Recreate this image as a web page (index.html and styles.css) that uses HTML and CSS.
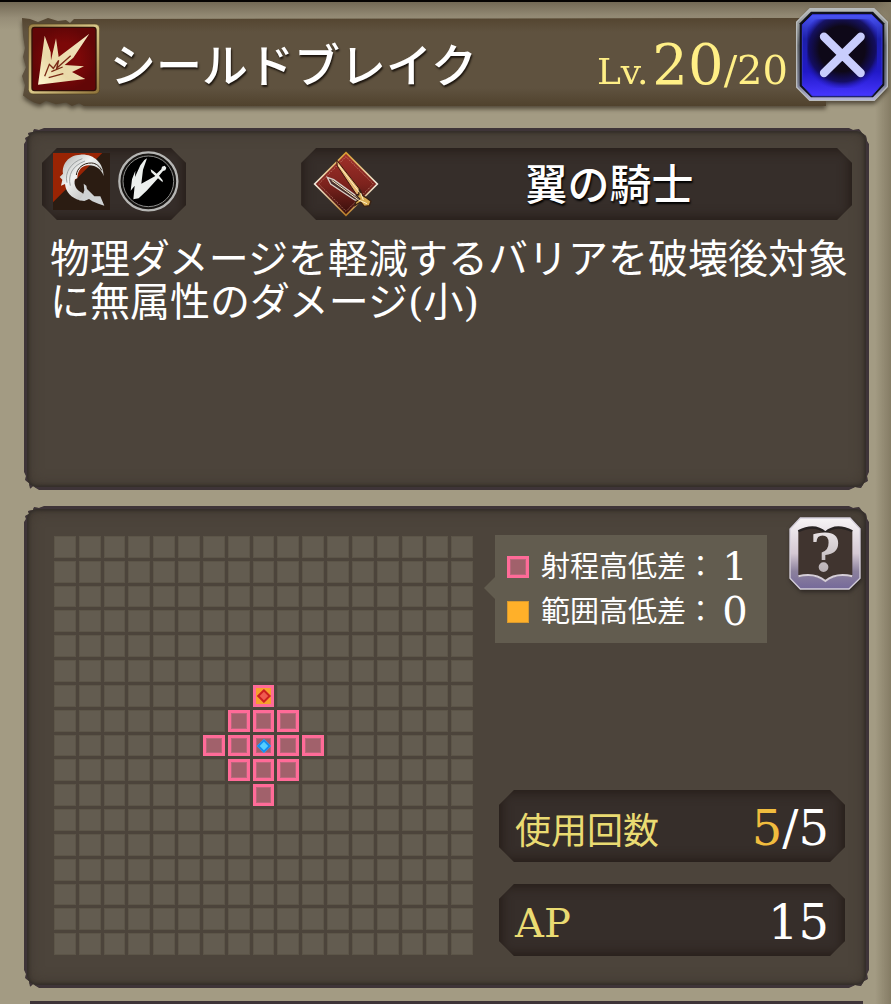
FILE: index.html
```
<!DOCTYPE html>
<html lang="ja">
<head>
  <meta charset="UTF-8">
  <meta name="viewport" content="width=device-width, initial-scale=1">
  <title>シールドブレイク</title>
  <link rel="stylesheet" href="styles.css">
</head>
<body>
  <div class="page">
    <header class="top">
      <div class="title-bar">
        <svg class="skill-icon" viewBox="0 0 216 216" aria-hidden="true">
          <defs>
            <linearGradient id="frame" x1="0" y1="0" x2="1" y2="1">
              <stop offset="0" stop-color="#9a7f45"/><stop offset=".5" stop-color="#d9c88a"/><stop offset="1" stop-color="#8d7138"/>
            </linearGradient>
            <radialGradient id="red"><stop offset=".5" stop-color="#7c0808"/><stop offset="1" stop-color="#620607"/></radialGradient>
            <linearGradient id="burst" x1="0" y1="1" x2="1" y2="0">
              <stop offset="0" stop-color="#fff6cf"/><stop offset=".35" stop-color="#e9d9a8"/><stop offset="1" stop-color="#f3e6c2"/>
            </linearGradient>
          </defs>
          <rect x="1" y="3" width="214" height="210" rx="14" fill="url(#frame)" stroke="#50401f" stroke-width="2"/>
          <rect x="12" y="13" width="192" height="190" rx="8" fill="url(#red)" stroke="#321008" stroke-width="4"/>
          <path d="M30 185 50 38 68 88 69 112 84 46 92 102 184 32 136 104 110 126 168 130 132 147 172 168Z" fill="url(#burst)"/>
          <path d="M50 160 64 124 76 136 92 112 86 136 128 98M70 146 104 132M62 164 106 152" fill="none" stroke="#7a2a16" stroke-width="4"/>
        </svg>
        <h1>シールドブレイク</h1>
        <div class="level">Lv.<b>20</b><span>/20</span></div>
      </div>
      <button class="close-btn" type="button" aria-label="閉じる">
        <svg viewBox="0 0 276 280" aria-hidden="true">
          <defs>
            <linearGradient id="steel" x1="0" y1="0" x2="0" y2="1">
              <stop offset="0" stop-color="#b9bdbb"/><stop offset=".4" stop-color="#5d6167"/><stop offset=".8" stop-color="#717589"/><stop offset="1" stop-color="#b8b7df"/>
            </linearGradient>
            <linearGradient id="blue" x1="0" y1="0" x2="0" y2="1">
              <stop offset="0" stop-color="#4a55f5"/><stop offset=".3" stop-color="#1c1fa8"/><stop offset=".7" stop-color="#2119c8"/><stop offset="1" stop-color="#4635ff"/>
            </linearGradient>
            <radialGradient id="dark" cx=".5" cy=".43" r=".6">
              <stop offset=".55" stop-color="#0e0818"/><stop offset=".8" stop-color="#110b50" stop-opacity=".85"/><stop offset="1" stop-color="#2018c8" stop-opacity="0"/>
            </radialGradient>
          </defs>
          <path d="M42 2H234L274 42V236L234 278H42L2 238V42Z" fill="url(#steel)" stroke="#b9bcbe" stroke-width="4"/>
          <path d="M45 11H231L265 46V232L231 268H45L11 234V46Z" fill="#10111c"/>
          <path d="M49 20H227L258 50V228L227 264H49L19 232V50Z" fill="url(#blue)" stroke="#3535d8" stroke-width="3"/>
          <path d="M56 34H220L243 56V220L220 240H56L34 220V56Z" fill="url(#dark)"/>
          <path d="M84 86 194 195M194 86 84 195" stroke="#c9cdfd" stroke-width="25" stroke-linecap="round"/>
        </svg>
      </button>
    </header>

    <section class="panel summary">
      <div class="chips">
        <div class="chip types">
          <svg class="type-sq" viewBox="0 0 171 171" role="img" aria-label="斬撃">
            <defs>
              <linearGradient id="silver" x1="0" y1="0" x2="1" y2="1">
                <stop offset="0" stop-color="#a9aaa8"/><stop offset=".4" stop-color="#f1f3f2"/><stop offset="1" stop-color="#a5a5a3"/>
              </linearGradient>
            </defs>
            <path d="M0 0H171V171H0Z" fill="#2b1c12"/>
            <path d="M0 0H148L0 148Z" fill="#992404"/>
            <path d="M152 70C152 28 120 2 82 5 46 6 26 34 30 62L20 72 28 80 24 98 36 93C38 118 56 136 82 142L100 134 88 120C70 112 61 96 66 79L73 76C73 53 87 37 106 37 128 36 146 49 152 70Z" fill="url(#silver)"/>
            <path d="M70 66C72 46 90 29 116 30 130 31 140 40 146 52" fill="none" stroke="#2b1c12" stroke-width="3"/>
            <path d="M42 89C34 59 54 28 88 17M52 98C44 66 58 38 96 24" fill="none" stroke="#9ea2a3" stroke-width="3"/>
            <path d="M92 92 100 98 102 108 112 118 124 130 142 130 154 158 136 152 118 145 108 138 94 144 78 142 88 130 94 112Z" fill="#cfd2d3"/>
          </svg>
          <svg class="type-round" viewBox="0 0 183 183" role="img" aria-label="物理">
            <circle cx="91" cy="91" r="87" fill="#171513" stroke="#b6b6b4" stroke-width="7"/>
            <circle cx="91" cy="91" r="76" fill="#000" stroke="#8b8b89" stroke-width="3"/>
            <path d="M46 145 50 104 38 119 42 85 52 59 51 78 67 43 79 27 87 22 75 56 70 98 112 75 100 64 98 55 105 59 116 68 130 55 132 47 140 44 145 50 142 58 135 60 123 74 134 88 134 94 120 82 86 119 62 142Z" fill="#edf0ee"/>
          </svg>
        </div>
        <div class="chip job">
          <svg class="job-icon" viewBox="0 0 198 198" aria-hidden="true">
            <defs>
              <linearGradient id="gem" x1="0" y1="0" x2="0" y2="1">
                <stop offset="0" stop-color="#a3302a"/><stop offset=".5" stop-color="#7d231d"/><stop offset="1" stop-color="#350e0b"/>
              </linearGradient>
              <linearGradient id="gold" x1="0" y1="0" x2="0" y2="1">
                <stop offset="0" stop-color="#d59a2e"/><stop offset=".5" stop-color="#f1e8dc"/><stop offset="1" stop-color="#b67a25"/>
              </linearGradient>
            </defs>
            <path d="M99 5 193 99 99 193 5 99Z" fill="url(#gem)" stroke="url(#gold)" stroke-width="5"/>
            <path d="M99 17 181 99 99 181 17 99Z" fill="none" stroke="#d49b83" stroke-width="2" stroke-dasharray="4 3"/>
            <path d="M71 27 85 45 145 121 141 131 130 130 73 45Z" fill="#e4b570" stroke="#3d1711" stroke-width="3"/>
            <path d="M43 79 62 86 136 139 142 151 125 147 53 99Z" fill="#4a302d" stroke="#d8cdc5" stroke-width="4"/>
            <path d="M139 115 148 133 158 139 174 151 169 164 154 166 143 153 126 163 128 153 140 144 130 133 137 132Z" fill="#d8ad52" stroke="#392113" stroke-width="4"/>
            <path d="M76 41 139 124M56 88 137 147 162 158M143 126 151 147" fill="none" stroke="#fff1c6" stroke-width="3"/>
          </svg>
          <span class="job-name">翼の騎士</span>
        </div>
      </div>
      <p class="description">物理ダメージを軽減するバリアを破壊後対象に無属性のダメージ(小)</p>
    </section>

    <section class="panel range">
      <div class="map" id="map"></div>
      <div class="side">
        <div class="side-top">
          <dl class="legend">
            <div><dt><i class="swatch reach"></i>射程高低差：</dt><dd>1</dd></div>
            <div><dt><i class="swatch area"></i>範囲高低差：</dt><dd>0</dd></div>
          </dl>
          <button class="help-btn" type="button" aria-label="ヘルプ">
            <svg viewBox="0 0 216 222" aria-hidden="true">
              <defs>
                <linearGradient id="pearl" x1="0" y1="0" x2="0" y2="1">
                  <stop offset="0" stop-color="#f7f4f6"/><stop offset=".5" stop-color="#d5c8d3"/><stop offset=".75" stop-color="#8c819d"/><stop offset="1" stop-color="#75699a"/>
                </linearGradient>
                <linearGradient id="mark" x1="0" y1="0" x2="0" y2="1">
                  <stop offset="0" stop-color="#f4eef0"/><stop offset="1" stop-color="#aaa1a5"/>
                </linearGradient>
              </defs>
              <path d="M34 3H183L213 35V184L180 216H34L3 184V36Z" fill="url(#pearl)" stroke="#d5cfdb" stroke-width="4"/>
              <path d="M28 43Q77 18 109 47 141 18 190 43V180Q141 168 109 194 77 168 28 180Z" fill="#40342f"/>
              <path d="M28 43Q77 18 109 47 141 18 190 43" fill="none" stroke="#282323" stroke-width="7"/>
              <path d="M28 178Q77 166 109 192 141 166 190 178" fill="none" stroke="#d5ced8" stroke-width="6"/>
              <text x="109" y="163" text-anchor="middle" class="help-mark" fill="url(#mark)">?</text>
            </svg>
          </button>
        </div>
        <dl class="stats">
          <div class="chip"><dt>使用回数</dt><dd><em>5</em>/5</dd></div>
          <div class="chip"><dt class="latin">AP</dt><dd>15</dd></div>
        </dl>
      </div>
    </section>

    <section class="panel-next"></section>
  </div>

  <script>
    const map = document.getElementById('map');
    const size = 17;
    const center = 8;
    const reach = 2;

    for (let y = 0; y < size; y++) {
      for (let x = 0; x < size; x++) {
        const cell = document.createElement('span');
        const distance = Math.abs(x - center) + Math.abs(y - center);
        cell.className = 'cell';
        if (distance <= reach) cell.classList.add('reach');
        if (distance === 0) cell.classList.add('self');
        if (x === center && y === center - reach) cell.classList.add('target');
        map.appendChild(cell);
      }
    }
  </script>
</body>
</html>
```
FILE: styles.css
```
* {
  box-sizing: border-box;
}
body {
  margin: 0;
  background: #a39b83;
  color: #fff;
  font-family: "DejaVu Serif", "Noto Sans CJK JP", serif;
}
h1, p, dl, dd {
  margin: 0;
}
button {
  padding: 0;
  border: none;
  background: none;
  cursor: pointer;
}
svg {
  display: block;
}
.page {
  display: flex;
  flex-direction: column;
  min-height: 100vh;
  padding: 8px 22px 0 24px;
  border-top: 2px solid #050302;
  background:
    linear-gradient(to left, #857c65, rgba(163,155,131,0) 16px),
    linear-gradient(#736955, #978e78 16px, #a39b83 28px);
}

/* header */
.top {
  display: flex;
  align-items: flex-start;
  margin: -2px -19px 0 -2px;
  filter: drop-shadow(0 3px 2px rgba(50,42,28,0.7));
}
.title-bar {
  flex: 1;
  display: flex;
  align-items: center;
  height: 88px;
  margin-top: 10px;
  padding: 0 38px 6px 6px;
  background: linear-gradient(#544530, #5f523f 14px, #5f523f 70px, #50422d);
  clip-path: polygon(0 0, 8px 1px, 16px 4px, 26px 0, 36px 3px, 44px 2px, 48px 5px, 52px 1px, 100% 0, 100% 100%, 62px 100%, 57px 97%, 50px 100%, 44px 96%, 34px 98%, 24px 94%, 18px 98%, 12px 96%, 6px 92%, 1px 88%, 3px 76%, 0 66%, 4px 56%, 1px 44%, 3px 34%, 1px 20%);
}
.skill-icon {
  flex: none;
  width: 72px;
  height: 72px;
}
h1 {
  flex: 1;
  margin-left: 10px;
  padding-top: 14px;
  font-size: 46px;
  font-weight: 500;
  line-height: 72px;
  white-space: nowrap;
  text-shadow: 1px 2px 2px #1c150e;
}
.level {
  padding-top: 18px;
  color: #ffef86;
  font-size: 36px;
  line-height: 72px;
  white-space: nowrap;
}
.level b {
  margin-left: 4px;
  font-size: 56px;
  font-weight: 400;
}
.level span {
  font-size: 40px;
}
.close-btn {
  position: relative;
  flex: none;
  width: 92px;
  margin-left: -30px;
}

/* panels */
.panel {
  border: 3px solid #3e3438;
  border-radius: 12px;
  background: #4c443b;
  box-shadow: inset 0 0 3px 2px #332e29, inset 0 0 14px 2px #403830;
  clip-path: polygon(0 16px, 2px 13px, 1px 10px, 5px 8px, 4px 5px, 9px 4px, 10px 1px, 15px 2px, 20px 0, calc(100% - 20px) 0, calc(100% - 16px) 2px, calc(100% - 10px) 1px, calc(100% - 7px) 5px, calc(100% - 3px) 8px, calc(100% - 2px) 13px, 100% 16px, 100% calc(100% - 18px), calc(100% - 2px) calc(100% - 14px), calc(100% - 1px) calc(100% - 9px), calc(100% - 5px) calc(100% - 7px), calc(100% - 8px) calc(100% - 2px), calc(100% - 14px) calc(100% - 3px), calc(100% - 20px) 100%, 15px 100%, 9px calc(100% - 4px), 6px calc(100% - 1px), 5px calc(100% - 7px), 1px calc(100% - 10px), 2px calc(100% - 14px), 0 calc(100% - 18px));
}
.chip {
  display: flex;
  align-items: center;
  height: 72px;
  background: #362e2a;
  box-shadow: inset 0 0 12px 2px #241b16;
  clip-path: polygon(15px 0, calc(100% - 15px) 0, 100% 15px, 100% calc(100% - 15px), calc(100% - 15px) 100%, 15px 100%, 0 calc(100% - 15px), 0 15px);
}
.summary {
  min-height: 362px;
  margin-top: 22px;
  padding: 17px 14px 17px 15px;
}
.chips {
  display: flex;
  justify-content: space-between;
}
.types {
  gap: 8px;
  padding: 0 7px 6px 11px;
}
.type-sq {
  width: 57px;
}
.type-round {
  width: 61px;
}
.job {
  flex: 0 1 68%;
  padding: 0 12px;
}
.job-icon {
  flex: none;
  width: 66px;
}
.job-name {
  flex: 1;
  padding-top: 4px;
  font-size: 42px;
  font-weight: 500;
  line-height: 72px;
  text-align: center;
  text-shadow: 1px 2px 2px #000;
}
.description {
  margin: 18px 0 0 8px;
  font-size: 40px;
  line-height: 43px;
}

/* range map */
.range {
  display: flex;
  gap: 22px;
  margin-top: 16px;
  padding: 8px 5px 29px 27px;
}
.map {
  display: grid;
  grid-template-columns: repeat(17, 1fr);
  gap: 3px;
  flex: 0 1 419px;
  align-self: flex-start;
  margin: 19px 0 1px;
}
.cell {
  position: relative;
  aspect-ratio: 1;
  border: 1px solid #5c5548;
  background: #635c50;
}
.reach {
  border: 3px solid #ff6b98;
  background: #a1616b;
  box-shadow: inset 0 0 0 1px #b9667b;
}
.target {
  background: #f6a02c;
  box-shadow: none;
}
.self::after,
.target::after {
  content: "";
  position: absolute;
  inset: 3px;
  background: #55cfff;
  border: 2px solid #168cf0;
  transform: rotate(45deg);
}
.target::after {
  background: #f05a50;
  border-color: #cc2020;
}
.side {
  flex: 1;
  display: flex;
  flex-direction: column;
  justify-content: space-between;
}
.side-top {
  display: flex;
  align-items: flex-start;
  justify-content: space-between;
}
.legend {
  position: relative;
  width: 272px;
  margin-top: 18px;
  padding: 9px 12px;
  background: #625c4f;
}
.legend::before {
  content: "";
  position: absolute;
  left: -11px;
  top: 42px;
  border: solid transparent;
  border-width: 11px 11px 11px 0;
  border-right-color: #625c4f;
}
.legend div {
  display: flex;
  align-items: center;
  height: 45px;
}
.legend dt {
  display: flex;
  align-items: center;
  font-size: 29px;
  line-height: 40px;
  white-space: nowrap;
}
.legend dd {
  flex: 1;
  font-size: 40px;
  line-height: 45px;
  text-align: center;
}
.swatch {
  width: 22px;
  height: 22px;
  margin-right: 12px;
}
.area {
  background: #ffb029;
  border: 1px solid #d99a2f;
}
.help-btn {
  width: 72px;
  filter: drop-shadow(1px 2px 2px #2a2421);
}
.help-mark {
  font-family: "DejaVu Serif", serif;
  font-size: 156px;
  font-weight: 700;
}
.stats {
  display: flex;
  flex-direction: column;
  gap: 22px;
  margin: 0 16px 0 4px;
}
.stats .chip {
  justify-content: space-between;
  padding: 4px 16px 0;
}
.stats dt {
  color: #eadb72;
  font-size: 36px;
}
.stats .latin {
  padding-top: 2px;
  font-size: 40px;
}
.stats dd {
  font-size: 48px;
  line-height: 72px;
}
.stats em {
  color: #f0bc3e;
  font-style: normal;
}

.panel-next {
  flex: 1;
  min-height: 3px;
  margin: 13px 6px 0;
  background: #3e3438;
}
```
